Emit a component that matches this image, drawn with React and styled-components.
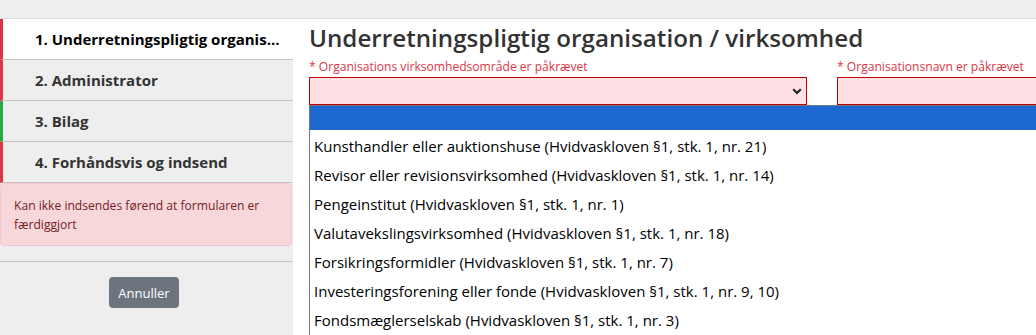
import React from "react";
import styled, { createGlobalStyle } from "styled-components";

const GlobalStyle = createGlobalStyle`
  html, body { margin: 0; padding: 0; overflow: hidden; }
  body { background: #fff; font-family: "Open Sans", "Noto Sans", sans-serif; color: #333; }
  * { box-sizing: border-box; }
`;

const Page = styled.div`
  width: 1036px;
  height: 335px;
  overflow: hidden;
  display: flex;
  flex-direction: column;
`;

const TopBar = styled.div`
  height: 19px;
  flex: none;
  background: #eeeeee;
  border-bottom: 1px solid #d9d9d9;
`;

const Body = styled.div`
  flex: 1;
  display: flex;
  min-height: 0;
`;

const Sidebar = styled.nav`
  width: 293px;
  flex: none;
  background: #eeeeee;
  display: flex;
  flex-direction: column;
`;

const NavItem = styled.div`
  height: 41px;
  display: flex;
  align-items: center;
  padding: 0 8px 0 32px;
  border-left: 3px solid ${(p) => (p.done ? "#28a745" : "#dc3545")};
  border-bottom: 1px solid #c4c4c4;
  background: ${(p) => (p.active ? "#ffffff" : "transparent")};
  color: ${(p) => (p.active ? "#000" : "#333")};
  font-size: 15px;
  font-weight: 700;
  white-space: nowrap;
  overflow: hidden;
  & > span {
    overflow: hidden;
    text-overflow: ellipsis;
  }
`;

const Alert = styled.div`
  background: #f8d7da;
  border: 1px solid #f5c6cb;
  border-radius: 4px;
  color: #721c24;
  font-size: 12.1px;
  line-height: 19px;
  padding: 12px 13px 11px;
  margin-right: 1px;
`;

const Divider = styled.hr`
  border: 0;
  border-top: 1px solid #c4c4c4;
  margin: 15px 0 15px;
`;

const ButtonRow = styled.div`
  display: flex;
  justify-content: center;
  padding-right: 5px;
`;

const Button = styled.button`
  background: #6c757d;
  color: #fff;
  border: 0;
  border-radius: 4px;
  height: 31px;
  width: 70px;
  font-family: "Open Sans", sans-serif;
  font-size: 13px;
  padding: 0;
`;

const Main = styled.main`
  flex: 1;
  padding-left: 16px;
  background: #fff;
  min-width: 0;
`;

const Title = styled.h1`
  margin: 0;
  font-size: 24.2px;
  font-weight: 600;
  line-height: 37px;
  color: #333;
  white-space: nowrap;
`;

const FieldRow = styled.div`
  display: flex;
  gap: 30px;
  margin-top: 3px;
`;

const Field = styled.div`
  width: ${(p) => p.w}px;
  flex: none;
  position: relative;
`;

const Label = styled.div`
  color: #dc3545;
  font-size: 12.1px;
  line-height: 16px;
  white-space: nowrap;
  margin-bottom: 2px;
`;

const Control = styled.div`
  height: 28px;
  border: 1px solid #c00000;
  background: #ffe1e6;
  display: flex;
  align-items: center;
  justify-content: flex-end;
  padding-right: 4px;
`;

const Chevron = () => (
  <svg width="10" height="7" viewBox="0 0 10 7">
    <path d="M1.2 1.2 L5 5 L8.8 1.2" fill="none" stroke="#222" strokeWidth="2.2" />
  </svg>
);

const DropList = styled.ul`
  position: absolute;
  left: 0;
  top: 100%;
  width: 760px;
  margin: 0;
  padding: 0;
  list-style: none;
  background: #fff;
  border: 1px solid #767676;
  z-index: 10;
`;

const Option = styled.li`
  height: ${(p) => (p.blank ? 24 : 29)}px;
  margin-bottom: ${(p) => (p.blank ? 2 : 0)}px;
  line-height: 29px;
  padding-left: 4px;
  font-size: 15px;
  color: #000;
  white-space: nowrap;
  background: ${(p) => (p.selected ? "#1a68d0" : "transparent")};
`;

const options = [
  "Kunsthandler eller auktionshuse (Hvidvaskloven §1, stk. 1, nr. 21)",
  "Revisor eller revisionsvirksomhed (Hvidvaskloven §1, stk. 1, nr. 14)",
  "Pengeinstitut (Hvidvaskloven §1, stk. 1, nr. 1)",
  "Valutavekslingsvirksomhed (Hvidvaskloven §1, stk. 1, nr. 18)",
  "Forsikringsformidler (Hvidvaskloven §1, stk. 1, nr. 7)",
  "Investeringsforening eller fonde (Hvidvaskloven §1, stk. 1, nr. 9, 10)",
  "Fondsmæglerselskab (Hvidvaskloven §1, stk. 1, nr. 3)",
];

const steps = [
  { label: "1. Underretningspligtig organisation / virksomhed", active: true },
  { label: "2. Administrator" },
  { label: "3. Bilag", done: true },
  { label: "4. Forhåndsvis og indsend" },
];

export default function App() {
  return (
    <Page>
      <GlobalStyle />
      <TopBar />
      <Body>
        <Sidebar>
          {steps.map((s) => (
            <NavItem key={s.label} active={s.active} done={s.done}>
              <span>{s.label}</span>
            </NavItem>
          ))}
          <Alert>Kan ikke indsendes førend at formularen er færdiggjort</Alert>
          <Divider />
          <ButtonRow>
            <Button>Annuller</Button>
          </ButtonRow>
        </Sidebar>
        <Main>
          <Title>Underretningspligtig organisation / virksomhed</Title>
          <FieldRow>
            <Field w={498}>
              <Label>* Organisations virksomhedsområde er påkrævet</Label>
              <Control>
                <Chevron />
              </Control>
              <DropList>
                <Option blank selected />
                {options.map((o) => (
                  <Option key={o}>{o}</Option>
                ))}
              </DropList>
            </Field>
            <Field w={400}>
              <Label>* Organisationsnavn er påkrævet</Label>
              <Control />
            </Field>
          </FieldRow>
        </Main>
      </Body>
    </Page>
  );
}
